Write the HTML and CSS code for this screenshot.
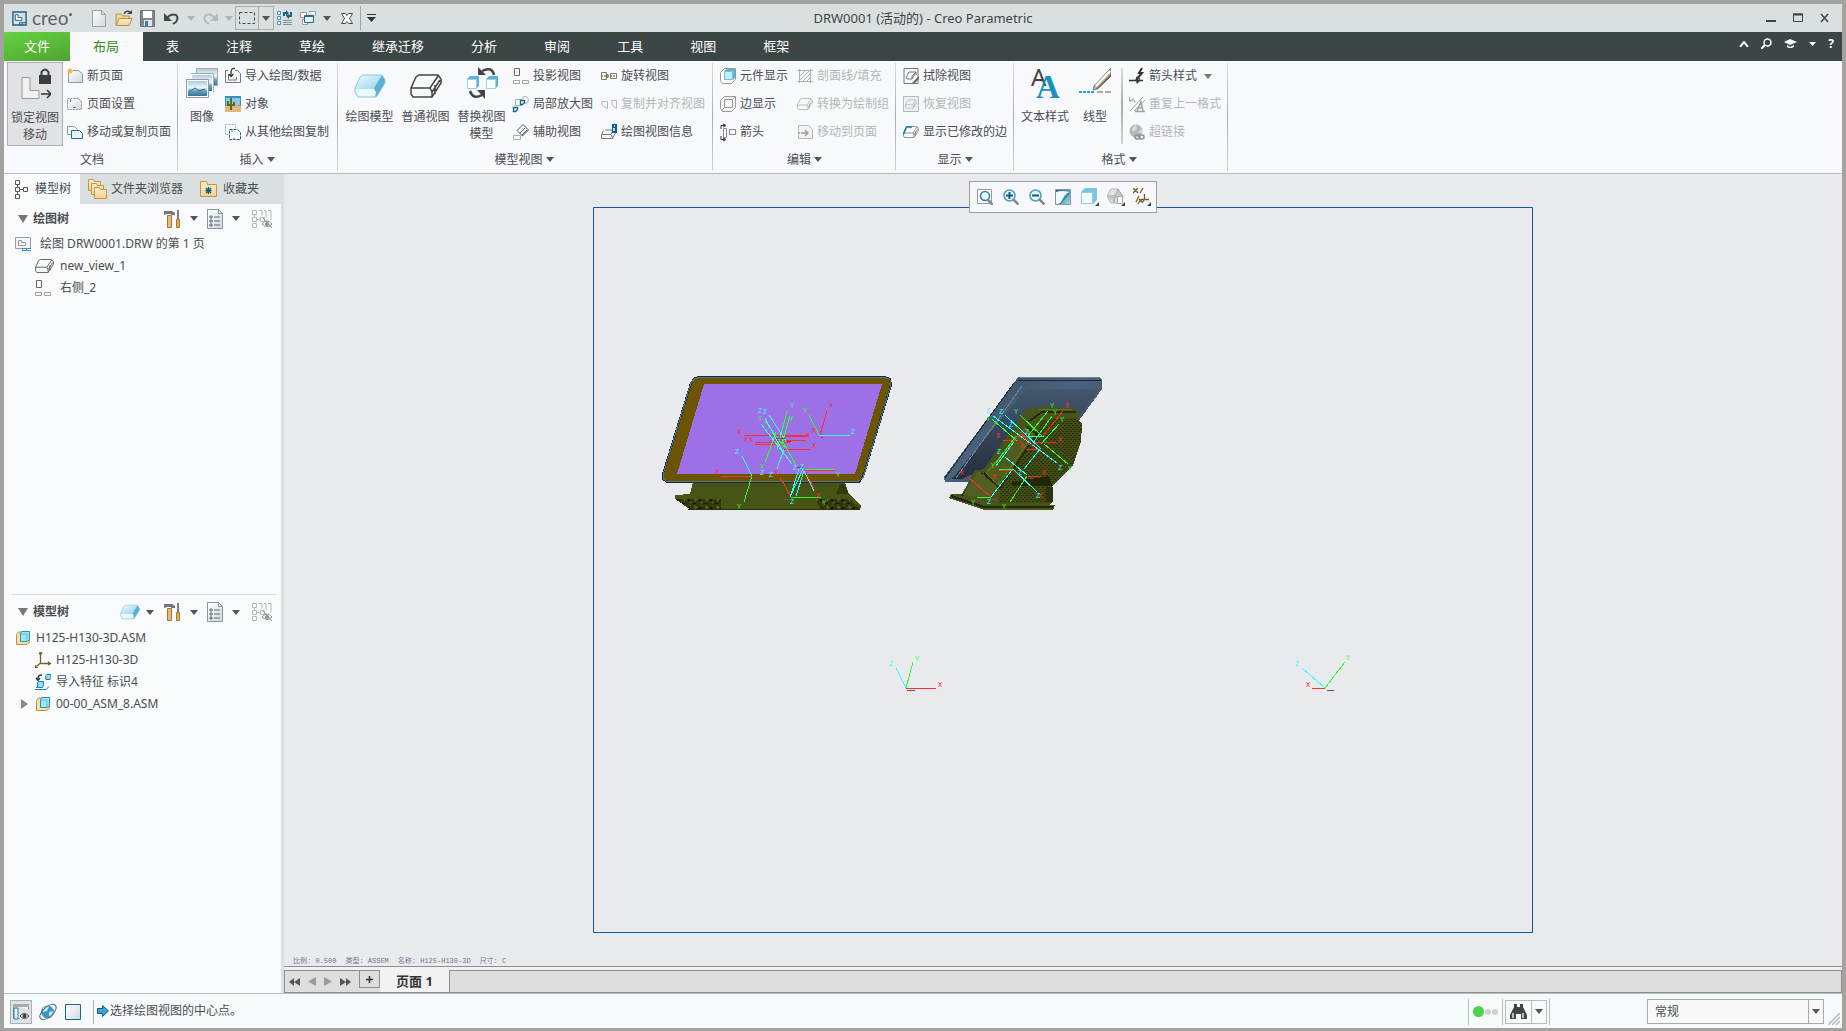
FILE: index.html
```html
<!DOCTYPE html>
<html lang="zh-CN">
<head>
<meta charset="utf-8">
<title>DRW0001 (活动的) - Creo Parametric</title>
<link rel="stylesheet" href="styles.css">
</head>
<body>
<svg class="defs" aria-hidden="true">
  <defs>
    <linearGradient id="gBlue" x1="0" y1="0" x2="1" y2="1"><stop offset="0" stop-color="#f0fcff"/><stop offset="1" stop-color="#8fd2ec"/></linearGradient>
    <linearGradient id="gPage" x1="0" y1="0" x2="1" y2="1"><stop offset="0" stop-color="#fff"/><stop offset="1" stop-color="#cfd8dd"/></linearGradient>
    <linearGradient id="gFolder" x1="0" y1="0" x2="0" y2="1"><stop offset="0" stop-color="#fff0cd"/><stop offset="1" stop-color="#f3cf90"/></linearGradient>
    <linearGradient id="gTeal" x1="0" y1="0" x2="1" y2="1"><stop offset="0" stop-color="#0d5f86"/><stop offset="1" stop-color="#a6dcf0"/></linearGradient>
    <linearGradient id="gSky" x1="0" y1="0" x2="0" y2="1"><stop offset="0" stop-color="#a9cbe2"/><stop offset=".45" stop-color="#eef6fa"/><stop offset=".65" stop-color="#6aa6c2"/><stop offset="1" stop-color="#2f7598"/></linearGradient>
  </defs>
  <symbol id="caret" viewBox="0 0 8 5"><path d="M0 0h8L4 5z" fill="currentColor"/></symbol>
  <symbol id="solid" viewBox="0 0 32 24"><path d="m1 14 5-11 3-2h19l-8 13-1 1H1z" fill="url(#gBlue)"/><path d="m20 14 8-13 3 5v3l-8 13-2 1z" fill="#5cb0d3"/><path d="M1 15h19l2 3-1 5H4l-3-5z" fill="#e6fafe"/><path d="M6 3 1 14v4l3 5h17l2-1 8-13V6l-3-5H9z" fill="none" stroke="#86c6de"/></symbol>
  <symbol id="wire" viewBox="0 0 32 24"><path d="M1 14v6l2 3h19l9-14V5l-3-4H9L6 3zM1 14h19l2 4v5M20 14l8-12M22 18 30 6M25 20V11" fill="none" stroke="currentColor" stroke-width="1.500"/></symbol>
  <symbol id="proj" viewBox="0 0 16 16"><path d="M1.500.5h5v7h-5z" fill="none" stroke="#66696b"/><path d="M.5 12.500h6v3h-6zM9.500 12.500h6v3h-6z" fill="none" stroke="#a0a4a6"/></symbol>
  <symbol id="hammer" viewBox="0 0 18 20"><path d="M1 2h8l3 2v2H8V5H4L1 6z" fill="#6f767d"/><path d="M4.500 6.500h4v12h-4z" fill="#e6bd7c" stroke="#a9772f"/><path d="M15 1v9" stroke="#777d83" stroke-width="2"/><path d="M13.500 10.500h3v8h-3z" fill="#e2b15f" stroke="#a9772f"/></symbol>
  <symbol id="list" viewBox="0 0 16 20"><path d="M.5.5h11l4 4v15H.5z" fill="url(#gPage)" stroke="#8b959b"/><path d="M11.500.5v4h4" fill="none" stroke="#8b959b"/><path d="M3 7h2v2H3zM3 11h2v2H3zM3 15h2v2H3zM7 8h6M7 12h6M7 16h6" fill="none" stroke="#5a6c77"/></symbol>
  <symbol id="filter" viewBox="0 0 20 20"><g fill="none" stroke="#b5babd"><path d="M.5 1.500h4v4h-4zM.5 8.500h4v4h-4zM.5 14.500h4v4h-4zM8.500 8.500h4v4h-4zM2.500 6v2M5 10.500h3M7 1.500h3v5M12 1.500h2v7M16 1.500h3v9"/></g><path d="M10 15q5-6 10 0-5 5-10 0z" fill="none" stroke="#8d9295"/><circle cx="15" cy="15" r="2" fill="#8d9295"/><path d="M11 9l9 10" stroke="#8d9295"/></symbol>
  <symbol id="asm" viewBox="0 0 16 16"><path d="M1.500 4.500 3.500 2h11v10l-2.500 2.500H1.500z" fill="#fbdfa4" stroke="#b98f4a"/><path d="M5.500 3.500 7 1.500h7.500v8l-2 2h-7z" fill="#9be6fb" stroke="#2f8fb5"/><path d="M6 4h6v7" fill="none" stroke="#5dbbdc"/></symbol>
</svg>
<div class="app">
  <header class="titlebar">
    <div class="quick">
      <svg class="app-icon" viewBox="0 0 16 16"><path d="M1 1h14v14H1z" fill="none" stroke="#1c6287" stroke-width="1.500"/><path d="M3.500 4v6h7V7h-4V4z" fill="#fff" stroke="#1c6287"/><path d="M8 15v-2.500h7M11 12v3" stroke="#1c6287" fill="none"/></svg>
      <span class="brand">creo<i></i></span>
      <button class="ib q-new" aria-label="新建"><svg width="14" height="17"><path d="M.5.5h9l4 4v12H.5z" fill="url(#gPage)" stroke="#9aa0a3"/><path d="M9.500.5v4h4" fill="none" stroke="#9aa0a3"/></svg></button>
      <button class="ib" aria-label="打开"><svg width="18" height="17"><path d="M1 15V4h5l2 2h6v3" fill="#f3d49b" stroke="#b98d4a"/><path d="M1 15.500 4 8.500h13l-3 7z" fill="url(#gFolder)" stroke="#b98d4a"/><path d="M9 4q2-4 6-2" fill="none" stroke="#3c4646" stroke-width="1.500"/><path d="M12 4h5V0z" fill="#3c4646"/></svg></button>
      <button class="ib" aria-label="保存"><svg width="15" height="17"><path d="M.5.500h14v16H.5z" fill="#86898c" stroke="#6d7174"/><path d="M3 1h9v7H3z" fill="#fff"/><path d="M4 10h8v6H4z" fill="#dbe6ee"/><path d="M5 11h3v5H5z" fill="#467b9c"/></svg></button>
      <button class="ib q-undo" aria-label="撤消"><svg width="16" height="13"><path d="M3 6q4-5 9-3 3 3 0 7l-3 2" fill="none" stroke="#42494b" stroke-width="2"/><path d="M0 1v8h8z" fill="#42494b"/></svg></button>
      <button class="ib dim" aria-label="撤消列表"><svg width="8" height="5"><use href="#caret"/></svg></button>
      <button class="ib" aria-label="重做"><svg width="16" height="13"><path d="M13 6Q9 1 4 3 1 6 4 10l3 2" fill="none" stroke="#b4b9ba" stroke-width="2"/><path d="M16 1v8H8z" fill="#b4b9ba"/></svg></button>
      <button class="ib dim" aria-label="重做列表"><svg width="8" height="5"><use href="#caret"/></svg></button>
      <div class="split"><button aria-label="框选"><svg width="16" height="12"><path d="M.5.5h15v11H.5z" fill="none" stroke="#444" stroke-dasharray="3 2"/></svg></button><button aria-label="选择列表"><svg width="8" height="5"><use href="#caret"/></svg></button></div>
      <button class="ib" aria-label="重新生成"><svg width="16" height="16"><path d="M.5 1.500h3v3h-3zM.5 6.500h3v3h-3zM.5 11.500h3v3h-3z" fill="#fff" stroke="#3a93b8"/><path d="M6 10.500h9M6 12.500h9M6 14.500h9" stroke="#8b9194"/><path d="M7 6V3h3M14 2v4h-4" fill="none" stroke="#19637f" stroke-width="2"/><path d="M9 0v6l3-3zM12 4v5L9 6z" fill="#19637f"/></svg></button>
      <button class="ib" aria-label="窗口"><svg width="16" height="16"><path d="M.5 2.500h6v5h-6zM2.500 9.500h5v5h-5zM9 1.500h6.500v4" fill="#fff" stroke="#999"/><path d="M4.500 5.500h9v7h-9z" fill="#e6f2f8" stroke="#256d90"/><path d="M5 6.500h8" stroke="#256d90"/></svg></button>
      <button class="ib" aria-label="窗口列表"><svg width="8" height="5"><use href="#caret"/></svg></button>
      <button class="ib q-close" aria-label="关闭窗口"><svg width="12" height="11"><path d="M.5.5h4L6 2.500 7.500.5h4L8.500 5.500l3 5h-4L6 8.500l-1.500 2h-4l3-5z" fill="#fff" stroke="#444"/></svg></button>
      <button class="ib q-more" aria-label="自定义快速访问工具栏"><svg width="9" height="8"><path d="M0 .5h9" stroke="#333"/><path d="M0 3h9L4.500 8z" fill="#333"/></svg></button>
    </div>
    <h1 class="title">DRW0001 (活动的) - Creo Parametric</h1>
    <div class="winctl">
      <button aria-label="最小化"><svg width="10" height="10"><path d="M0 8h10" stroke="#444" stroke-width="2"/></svg></button>
      <button aria-label="最大化"><svg width="10" height="10"><path d="M.5 1h9v7.500h-9z" fill="none" stroke="#444"/><path d="M0 1.500h10" stroke="#444" stroke-width="2"/></svg></button>
      <button aria-label="关闭"><svg width="9" height="10"><path d="m1 1 7 8M8 1 1 9" stroke="#444" stroke-width="1.500"/></svg></button>
    </div>
  </header>

  <nav class="tabs">
    <button class="tab file">文件</button><button class="tab active">布局</button><button class="tab">表</button><button class="tab">注释</button><button class="tab">草绘</button><button class="tab">继承迁移</button><button class="tab">分析</button><button class="tab">审阅</button><button class="tab">工具</button><button class="tab">视图</button><button class="tab">框架</button>
    <div class="tabtools">
      <button aria-label="折叠功能区"><svg width="10" height="6"><path d="M1 6 5 1l4 5" fill="none" stroke="#fff" stroke-width="2"/></svg></button>
      <button aria-label="搜索"><svg width="11" height="11"><circle cx="6.500" cy="4.500" r="3.500" fill="none" stroke="#fff" stroke-width="1.500"/><path d="M4 7 0 11" stroke="#fff" stroke-width="2"/></svg></button>
      <button aria-label="学习"><svg width="13" height="10"><path d="M0 3 6 0l7 3-7 3z" fill="#fff"/><path d="M3 6v2q3 2 7 0V6L6 8z" fill="#fff"/></svg></button>
      <button aria-label="学习列表"><svg width="7" height="4"><path d="M0 0h7L3.500 4z" fill="#fff"/></svg></button>
      <button aria-label="帮助" class="help">?</button>
    </div>
  </nav>

  <section class="ribbon">
    <div class="group"><div class="gbody">
      <button class="big pressed"><svg width="32" height="34"><path d="M3 9.500h8v13h9v8H3z" fill="#f2f2f3" stroke="#999"/><path d="M20 7h12v9H20z" fill="#3b3d3e"/><path d="M22.500 7V4q3.500-5 7 0v3" fill="none" stroke="#3b3d3e" stroke-width="2"/><path d="M22 26h9M28 22l4 4-4 4" fill="none" stroke="#333" stroke-width="1.500"/></svg><span>锁定视图<br>移动</span></button>
      <div class="col">
        <button class="sm"><svg viewBox="0 0 16 16"><path d="M1.500 5V14.500h14V6L11.500 2.500H6" fill="url(#gPage)" stroke="#93999c"/><path d="M3 0v6M0 3h6M1 1l4 4M5 1 1 5" stroke="#f5a623"/></svg>新页面</button>
        <button class="sm"><svg viewBox="0 0 16 16"><path d="M.5 2.500h11l3 3v8H.5z" fill="url(#gPage)" stroke="#8a9194" stroke-dasharray="2 1"/><path d="M3.500 3v3M6 11.500h3" stroke="#777"/></svg>页面设置</button>
        <button class="sm"><svg viewBox="0 0 16 16"><path d="M.5 10.500v-8h7l3 3v5z" fill="#f5f6f7" stroke="#999"/><path d="M4.500 6.500h8l3 3v5h-11z" fill="#e5f2f9" stroke="#226c90"/></svg>移动或复制页面</button>
      </div>
    </div><div class="glabel">文档</div></div>

    <div class="group g-insert"><div class="gbody">
      <button class="big"><svg width="32" height="34"><path d="M10.500 1.500h21v17h-21z" fill="url(#gSky)" stroke="#aaa"/><path d="M5.500 7.500h21v17h-21z" fill="url(#gSky)" stroke="#fff"/><path d="M4.500 6.500h23v19" fill="none" stroke="#aaa"/><path d="M.5 12.500h22v18H.5z" fill="#fff" stroke="#999"/><path d="M2 14h19v15H2z" fill="url(#gSky)"/><path d="m3 25 6-4 4 3 6-2" stroke="#316c8a" fill="none"/></svg><span>图像</span></button>
      <div class="col">
        <button class="sm"><svg viewBox="0 0 16 16"><path d="M3 2.500H.5v12h15v-9l-3-3H10M3.500 7v5h8V9" fill="#f4f5f5" stroke="#777"/><path d="M10 .5Q6 0 6 4v4M3.500 6 6 8.500 8.500 6" fill="none" stroke="#333" stroke-width="1.300"/></svg>导入绘图/数据</button>
        <button class="sm"><svg viewBox="0 0 16 16"><path d="M0 0h16v16H0z" fill="#3d90b8"/><path d="M1 2h14v7H1z" fill="#8ac9e7"/><path d="M0 10 8 8l8 2v6H0z" fill="#dfb777"/><path d="M6 14V2M3 5v4h6V6" fill="none" stroke="#5b6b20" stroke-width="2"/></svg>对象</button>
        <button class="sm"><svg viewBox="0 0 16 16"><path d="M.5.5h10v10H.5z" fill="none" stroke="#8fb0c0" stroke-dasharray="2 1"/><path d="M4.500 5.500h8l3 3v7h-11z" fill="#fff" stroke="#155f83" stroke-dasharray="3 1"/><path d="M7 6v2M9 13.500v2" stroke="#888"/></svg>从其他绘图复制</button>
      </div>
    </div><button class="glabel">插入<svg width="8" height="5"><use href="#caret"/></svg></button></div>

    <div class="group g-views"><div class="gbody">
      <button class="big"><svg width="32" height="34"><use href="#solid" y="7" width="32" height="24"/></svg><span>绘图模型</span></button>
      <button class="big"><svg width="32" height="34"><use href="#wire" y="7" width="32" height="24"/></svg><span>普通视图</span></button>
      <button class="big"><svg width="32" height="34"><path d="m1 12 3-3h9v10l-3 3V12zM20 12l3-3h9v10l-3 3V12z" fill="#5bb2d6"/><path d="M1.500 12.500h9v9h-9zM20.500 12.500h9v9h-9z" fill="#fff" stroke="#9fcfe2"/><path d="M28 8Q26-1 16 4M4 24q3 9 12 4" fill="none" stroke="#444" stroke-width="2.500"/><path d="M12 0v8h8zM19 32v-9h-8z" fill="#444"/></svg><span>替换视图<br>模型</span></button>
      <div class="col">
        <button class="sm"><svg viewBox="0 0 16 16"><use href="#proj"/></svg>投影视图</button>
        <button class="sm"><svg viewBox="0 0 16 16"><path d="M2.500 3.500h6v6h-6z" fill="none" stroke="#aaa"/><circle cx="12" cy="4" r="3.500" fill="none" stroke="#aaa"/><path d="M7.500 4.500h4v2l-2 2h-2zM.5 11.500h4v2l-2 2h-2z" fill="#fff" stroke="#15658b" stroke-width="1.400"/></svg>局部放大图</button>
        <button class="sm"><svg viewBox="0 0 16 16"><path d="m10 .5 5.500 5.500-6 6L4 6.500zM7 9l5-5M9 11l5-5" fill="none" stroke="#555"/><path d="M.5 11.500h7v4h-7z" fill="#fff" stroke="#aaa"/></svg>辅助视图</button>
      </div>
      <div class="col c2">
        <button class="sm"><svg viewBox="0 0 16 16"><path d="M.5 4.500h5v7h-5zM9.500 5.500h6v5h-6zM5 6.500h2v3H5" fill="none" stroke="#777"/><path d="M0 8h16" stroke="#a0782b" stroke-width="1.500" stroke-dasharray="2 1"/></svg>旋转视图</button>
        <button class="sm" disabled><svg viewBox="0 0 16 16"><path d="M.5 5.500h6v7l-4-2q-2-2-2-5zM15.500 4.500h-5l1 5 4 3z" fill="none" stroke="#b5b9bb"/></svg>复制并对齐视图</button>
        <button class="sm"><svg viewBox="0 0 16 16"><path d="m2.500 6.500-2 4v4h11l3-6M1 10.500h9l2 4M10 10.500 12 6H4" fill="#f7f7f7" stroke="#777"/><path d="M11 0h5v9h-5z" fill="#0c5f88"/><path d="M13 2h1M13 4v3" stroke="#fff" stroke-width="1.500"/></svg>绘图视图信息</button>
      </div>
    </div><button class="glabel">模型视图<svg width="8" height="5"><use href="#caret"/></svg></button></div>

    <div class="group g-edit"><div class="gbody">
      <div class="col">
        <button class="sm"><svg viewBox="0 0 16 16"><path d="M.5 4.500v8l2 3h9l4-4V.5h-11z" fill="#fff" stroke="#999"/><path d="m4 3 3-2h8l-2 2zM13 3l2-2v9l-2 2z" fill="#5cb4d7"/><path d="M4.500 3.500h8v8h-8z" fill="#c6ecf9" stroke="#6cc0de"/></svg>元件显示</button>
        <button class="sm"><svg viewBox="0 0 16 16"><path d="M.5 4.500v8l2 3h9l4-4V.5h-11zM4.500 3.500h8v8h-8zM4.500 11.500l-3 3M12.500 3.500l3-3" fill="none" stroke="#999"/></svg>边显示</button>
        <button class="sm"><svg viewBox="0 0 16 16"><path d="M3.500 4.500h3v9h-3zM9.500 5.500h6v5h-6z" fill="none" stroke="#888"/><path d="M5 1.500H1V5M5 15.500H1V12M3 0l3 1.500L3 3M3 14l3 1.500L3 17" fill="none" stroke="#333"/></svg>箭头</button>
      </div>
      <div class="col">
        <button class="sm" disabled><svg viewBox="0 0 16 16"><path d="M0 2.500h16M0 13.500h16M2.500 1v14M13.500 1v14M3 8l5-5M3 12l9-9M6 13l7-7M10 13l3-3" stroke="#adb1b3"/></svg>剖面线/填充</button>
        <button class="sm mute" disabled><svg viewBox="0 0 16 16"><use href="#wire" y="2" width="16" height="12"/></svg>转换为绘制组</button>
        <button class="sm" disabled><svg viewBox="0 0 16 16"><path d="M1.500 1.500h10l4 4v9h-14z" fill="#f2f3f3" stroke="#b5b9bb"/><path d="M1 9h2M4 9h2M6 9h5M8 6l3 3-3 3" fill="none" stroke="#969a9c" stroke-width="1.500"/></svg>移动到页面</button>
      </div>
    </div><button class="glabel">编辑<svg width="8" height="5"><use href="#caret"/></svg></button></div>

    <div class="group"><div class="gbody">
      <div class="col">
        <button class="sm"><svg viewBox="0 0 16 16"><path d="M1 .5h14v15H1z" fill="#f7f8f8" stroke="#777"/><path d="m3 10 3-6h7l-4 7H4zM9 11V8l4-4v3" fill="none" stroke="#777"/><path d="m9 15 7-7v3l-4 4z" fill="#666"/></svg>拭除视图</button>
        <button class="sm mute" disabled><svg viewBox="0 0 16 16"><path d="M.5.5h15v15H.5z" fill="#eef0f0" stroke="#b5b9bb"/><use href="#wire" x="2" y="3" width="12" height="10"/></svg>恢复视图</button>
        <button class="sm"><svg viewBox="0 0 16 16"><use href="#wire" y="2" width="16" height="12"/><path d="m.5 10 3-7H9" fill="none" stroke="#1677a4" stroke-width="1.500"/></svg>显示已修改的边</button>
      </div>
    </div><button class="glabel">显示<svg width="8" height="5"><use href="#caret"/></svg></button></div>

    <div class="group g-format"><div class="gbody">
      <button class="big"><svg class="letters" width="32" height="34"><text x="2" y="19" class="aa1">A</text><text x="7" y="31" class="aa2">A</text></svg><span>文本样式</span></button>
      <button class="big"><svg width="32" height="34"><path d="M32 1v8L18 22l-4 1 1-4z" fill="#b9b5b1" stroke="#777"/><path d="M31 4 17 19" stroke="#fff" stroke-width="2"/><path d="M32 8 18 22" stroke="#77563b" stroke-width="1.500"/><path d="M0 25h16" stroke="#26a2d6" stroke-width="2" stroke-dasharray="3 1"/><path d="M18 25h14" stroke="#aaa" stroke-width="2" stroke-dasharray="6 2"/></svg><span>线型</span></button>
      <div class="vsep"></div>
      <div class="col">
        <button class="sm"><svg viewBox="0 0 16 16"><path d="m13 0-3 5h3l-6 7" fill="none" stroke="#333" stroke-width="2"/><path d="M0 12.500h14M8 8.500v7M8 9q5 2 0 6" fill="none" stroke="#333" stroke-width="1.300"/></svg>箭头样式<svg class="c" viewBox="0 0 8 5"><use href="#caret"/></svg></button>
        <button class="sm" disabled><svg viewBox="0 0 16 16"><path d="M.5 1v4h4M1 5Q5 0 6 7M1 15 14 1M5 15 16 4" fill="none" stroke="#9da2a4"/><path d="m8 15 4-9 2 9M9 12h5M6 15.500h10" fill="none" stroke="#9da2a4" stroke-width="1.500"/></svg>重复上一格式</button>
        <button class="sm" disabled><svg viewBox="0 0 16 16"><circle cx="7" cy="7" r="6.500" fill="#b5b8b9"/><path d="m3 4 4-3 1 4-4 3zM9 8l4-3v4z" fill="#d9dbdc"/><rect x="6" y="11" width="5" height="4" rx="2" fill="none" stroke="#8f9395" stroke-width="1.500"/><rect x="10" y="11" width="5" height="4" rx="2" fill="none" stroke="#8f9395" stroke-width="1.500"/></svg>超链接</button>
      </div>
    </div><button class="glabel">格式<svg width="8" height="5"><use href="#caret"/></svg></button></div>
  </section>

  <main class="work">
    <aside class="panel">
      <div class="ptabs">
        <button class="ptab on"><svg width="15" height="20"><path d="M1.500 1.500h4v4h-4zM1.500 8.500h4v4h-4zM1.500 15.500h4v4h-4zM9.500 8.500h4v4h-4zM3.500 6v2M3.500 13v2M6 10.500h3" fill="#fff" stroke="#555"/></svg>模型树</button>
        <button class="ptab"><svg width="19" height="20"><g fill="url(#gFolder)" stroke="#c49348"><path d="M.5 3.500v-3h5l1 2h6v9H.5z"/><path d="M3.500 7.500v-3h5l1 2h6v9h-12z"/><path d="M6.500 11.500v-3h5l1 2h6v9h-12z"/></g></svg>文件夹浏览器</button>
        <button class="ptab fav"><svg width="17" height="16"><path d="M.5 15.500V.5h6l1 3h9v12z" fill="url(#gFolder)" stroke="#c49348"/><path d="M8.500 6v7M5.500 9.500h6M6 7l5 5M11 7l-5 5" stroke="#0b6387" stroke-width="1.300"/></svg>收藏夹</button>
      </div>
      <div class="trees">
        <section class="tree t1">
          <header class="thead"><span class="tri"></span><h2>绘图树</h2>
            <button aria-label="设置"><svg width="18" height="20"><use href="#hammer"/></svg><svg width="8" height="5"><use href="#caret"/></svg></button>
            <button aria-label="显示"><svg width="16" height="20"><use href="#list"/></svg><svg width="8" height="5"><use href="#caret"/></svg></button>
            <button class="flt" aria-label="过滤"><svg width="20" height="20"><use href="#filter"/></svg></button>
          </header>
          <ul>
            <li class="root page"><svg width="16" height="15"><path d="M.5.5h15v11h-15z" fill="#f5f7f8" stroke="#99a"/><path d="M3.500 3.500v5h7v-3h-4v-2z" fill="none" stroke="#999"/><path d="M7 13.500h9M7 11.500h9M7.500 11v3M11.500 11v3" stroke="#3892bd"/></svg>绘图 DRW0001.DRW 的第 1 页</li>
            <li class="kid wide"><svg width="19" height="16"><use href="#wire"/></svg>new_view_1</li>
            <li class="kid wide"><svg width="19" height="16"><use href="#proj" width="16" height="16"/></svg>右侧_2</li>
          </ul>
        </section>
        <section class="tree t2">
          <header class="thead"><span class="tri"></span><h2>模型树</h2>
            <button class="mdl" aria-label="模型"><svg width="20" height="16"><use href="#solid"/></svg><svg width="8" height="5"><use href="#caret"/></svg></button>
            <button aria-label="设置"><svg width="18" height="20"><use href="#hammer"/></svg><svg width="8" height="5"><use href="#caret"/></svg></button>
            <button aria-label="显示"><svg width="16" height="20"><use href="#list"/></svg><svg width="8" height="5"><use href="#caret"/></svg></button>
            <button class="flt" aria-label="过滤"><svg width="20" height="20"><use href="#filter"/></svg></button>
          </header>
          <ul>
            <li class="root"><svg width="16" height="16"><use href="#asm"/></svg>H125-H130-3D.ASM</li>
            <li class="kid"><svg width="16" height="16"><path d="M5.500 0v11M5 11.500h10M5.500 11 0 15.500M4 2l1.500-2L7 2M13 10l2.500 1.500L13 13M0 13v3h3" fill="none" stroke="#7b5d22" stroke-width="1.300"/></svg>H125-H130-3D</li>
            <li class="kid"><svg width="16" height="16"><path d="M10.500 2.500 12 .5h4v4l-1 1h-4zM2.500 8.500l1-1h5v4l-1 2h-5z" fill="#8fdcf5" stroke="#1c7ea8"/><path d="M0 15.500h11l3-3M1 14l2-2" fill="none" stroke="#1c7ea8"/><path d="M7 1Q2 1 3 6M1 4l2 2.500L5 4" fill="none" stroke="#333" stroke-width="1.300"/></svg>导入特征 标识4</li>
            <li class="kid exp"><svg width="16" height="16"><use href="#asm"/></svg>00-00_ASM_8.ASM</li>
          </ul>
        </section>
      </div>
    </aside>

    <div class="stage">
      <div class="canvas">
        <svg class="drawing" viewBox="284 174 1558 792" preserveAspectRatio="xMidYMid meet" role="img" aria-label="工程图">
          <defs>
            <pattern id="mesh" width="4" height="4" patternUnits="userSpaceOnUse"><path d="M0 0h4v4H0z" fill="#434d13"/><path d="M0 1h2v1H0zM2 3h2v1H2z" fill="#252c09"/></pattern>
            <pattern id="spots" width="11" height="8" patternUnits="userSpaceOnUse"><path d="M0 0h11v8H0z" fill="#2f370b"/><path d="m1 1 4 2-3 3zM7 5l3 1-2 2zM6 1h3v1z" fill="#59631f"/><path d="m5 4 3-2v4zM0 7h3v1H0z" fill="#121605"/></pattern>
            <linearGradient id="slate" x1="0" y1="0" x2="1" y2="1"><stop offset="0" stop-color="#31455a"/><stop offset=".45" stop-color="#4b647d"/><stop offset="1" stop-color="#2d3a49"/></linearGradient>
            <linearGradient id="back" x1="0" y1="0" x2="0" y2="1"><stop offset="0" stop-color="#43586e"/><stop offset="1" stop-color="#252f3c"/></linearGradient>
          </defs>
          <path d="M593.500 207.500h939v725h-939z" fill="none" stroke="#14579b"/>

          <!-- front view -->
          <g shape-rendering="crispEdges">
            <path d="M693 482h152l4 12 12 11v3l-3 2H691l-16-11v-4l15-1z" fill="#485416"/>
            <path d="M675 499h46v10h-31zM815 499h33l13 9-4 2h-35z" fill="url(#spots)"/>
            <path d="M840 484h4l5 10h-13z" fill="#303a0b"/><path d="M688 509.500h172" stroke="#293008"/>
            <path d="M700 377h185l5 2 1 6-28 92-4 5H667l-4-3v-5l28-91 4-5z" fill="#6b5402" stroke="#1c2832" stroke-width="2"/>
            <path d="M700 377.500h185l5 2 1 5-28 93-5 4H667l-4-3v-4l28-92 4-4z" fill="none" stroke="#58748d"/>
            <path d="M704 384h178l-27 90H677z" fill="#9e70e8"/>
            <path d="M694 396h2v2h-2zM684 429h2v1h-2zM678 446h2v1h-2z" fill="#a4300b"/>
          </g>
          <!-- side view -->
          <g shape-rendering="crispEdges">
            <path d="M1018 377h82l2 3v9l-38 52-81 41h-38l-1-5 72-97z" fill="url(#slate)"/>
            <path d="M1030 389h69l-30 42-90 40-17 8h-10l64-78q5-9 14-12z" fill="url(#back)"/>
            <path d="M1018 380.500h83M1014 383 945 478" fill="none" stroke="#1e2934"/><path d="M1020 377.500h80M1022 386 956 478" fill="none" stroke="#6b8298"/>
            <path d="m1036 407 38 1 4 4v7l4 5-1 18-8 24-21 20 1 15-3 4h5l-2 5H984l-35-12 2-4h11l13-24h8l43-60z" fill="#48541a"/>
            <path d="m1042 420 35-2 5 6-1 18-8 24-21 20v17h-54l5-23 27-33z" fill="url(#mesh)"/>
            <path d="m1028 422 14-10h34M1027 427l10 7-37 54-15-12M984 473l14 10M962 496l20-23" fill="none" stroke="#242b08" stroke-width="2"/>
            <path d="m1025 428 8 7-35 50-12-12zM1038 409h34" fill="#505c1c" stroke="#667423"/>
            <path d="m963 495 15-24 20 16-7 11z" fill="#535e24"/>
            <path d="M951 496 984 507h69" fill="none" stroke="#20280a" stroke-width="2"/>
            <path d="m1012 482 37-6 3 10h-40z" fill="#1f260a"/>
            <path d="M1046 487h7v15h-7z" fill="#2a330b"/>
          </g>
          <g class="axes" shape-rendering="crispEdges">
            <path class="r" d="M744 435.500h65M780 436.500h27M755 442.500h35M770 440.500h36M755 444.500h30M780 449.500h30M827 411l-7 24M721 476.500h31M780 477l11 20M805 470.500h30M806 472l9 19"/>
            <path class="g" d="m809 415 10 20M787 411l-10 39M790 416l-8 28M765 421l20 27M783 442l13 23M776 432l-11 31M752 476l-8 26M805 469.500h30M791 497.500h30"/>
            <path class="b" d="M819 435.500h31M765 418l18 34M769 415l17 26M761 424l31 40M784 449l-7 20M742 456l10 20M803 469l-13 28M804 471l10 20M799 469l-9 28M804 471l-8 25"/>
            <path class="r" d="m968 477 23 20M1003 440.500h15M1016 436.500h22M1033 442.500h23M1026 449.500h14M1063 411l-20 25M999 470.500h15M1028 476.500h13M1012 468l24 23M1018 431l23 21"/>
            <path class="g" d="m992 419 25 22M1020 415l23 22M1048 411l-21 26M1052 416l-19 27M1059 424l-18 20M1044 444l24 20M1016 436l-20 27M1027 476l-17 26M999 469.500h15M977 497.500h14"/>
            <path class="b" d="m993 416 64 47M1005 415l36 34M1014 442l-18 24M1040 449l-16 20M1005 457l22 18M1012 470l-21 27M1014 470l23 22M1028 436h16"/>
            <path class="r" d="M906 688.500h30M1312 688.500h13"/><path class="g" d="m906 688 7-26M1325 688l20-26"/><path class="b" d="m906 688-10-20M1325 688l-23-20"/>
            <path class="n" d="M907 690.500h8M1327 690.500h7M776 438.500h10M787 441.500h4M797 467.500h6M753 478.500h4M784 499.500h5M821 437.500h2M1016 442.500h7M1028 444.500h6M1005 467.500h6M1030 478.500h4M992 499.500h5"/>
          </g>
          <g class="lab r"><text x="737" y="434">X</text><text x="744" y="442">X</text><text x="749" y="442">X</text><text x="829" y="408">X</text><text x="806" y="438">X</text><text x="812" y="433">X</text><text x="812" y="448">X</text><text x="715" y="474">X</text><text x="774" y="475">X</text><text x="816" y="498">X</text><text x="960" y="475">X</text><text x="996" y="438">X</text><text x="1020" y="448">X</text><text x="1058" y="442">X</text><text x="1065" y="408">X</text><text x="1042" y="475">X</text><text x="1038" y="498">X</text><text x="992" y="479">X</text><text x="938" y="687">X</text><text x="1306" y="687">X</text></g>
          <g class="lab g"><text x="803" y="413">Y</text><text x="790" y="408">Y</text><text x="789" y="421">Y</text><text x="758" y="421">Y</text><text x="760" y="469">Y</text><text x="737" y="509">Y</text><text x="836" y="477">Y</text><text x="822" y="505">Y</text><text x="986" y="421">Y</text><text x="1014" y="414">Y</text><text x="1050" y="408">Y</text><text x="1053" y="415">Y</text><text x="1060" y="422">Y</text><text x="1068" y="471">Y</text><text x="991" y="468">Y</text><text x="971" y="505">Y</text><text x="1002" y="509">Y</text><text x="915" y="661">Y</text><text x="1346" y="660">Y</text></g>
          <g class="lab b"><text x="758" y="413">Z</text><text x="763" y="414">Z</text><text x="851" y="434">Z</text><text x="735" y="454">Z</text><text x="760" y="475">Z</text><text x="769" y="477">Z</text><text x="793" y="470">Z</text><text x="800" y="469">Z</text><text x="790" y="504">Z</text><text x="986" y="413">Z</text><text x="999" y="414">Z</text><text x="1009" y="427">Z</text><text x="1025" y="434">Z</text><text x="997" y="454">Z</text><text x="1058" y="470">Z</text><text x="1018" y="475">Z</text><text x="987" y="504">Z</text><text x="1036" y="498">Z</text><text x="889" y="666">Z</text><text x="1295" y="666">Z</text></g>
        </svg>
        <div class="viewbar" role="toolbar">
          <button aria-label="重新调整"><svg width="16" height="16"><path d="M.5.500h14v14H.5z" fill="#fff" stroke="#999"/><circle cx="8" cy="7" r="4.500" fill="#e9f6fb" stroke="#2d7ea3" stroke-width="1.500"/><path d="m11 11 5 5" stroke="#888" stroke-width="2.500"/></svg></button>
          <button aria-label="放大"><svg width="16" height="16"><circle cx="6.500" cy="6.500" r="5.500" fill="#e9f6fb" stroke="#4e9cbd" stroke-width="1.500"/><path d="M3 6.500h7M6.500 3v7" stroke="#12587c" stroke-width="2"/><path d="m10.500 10.500 5 5" stroke="#888" stroke-width="2.500"/></svg></button>
          <button aria-label="缩小"><svg width="16" height="16"><circle cx="6.500" cy="6.500" r="5.500" fill="#e9f6fb" stroke="#4e9cbd" stroke-width="1.500"/><path d="M3 6.500h7" stroke="#12587c" stroke-width="2"/><path d="m10.500 10.500 5 5" stroke="#888" stroke-width="2.500"/></svg></button>
          <button aria-label="重画"><svg width="16" height="16"><path d="M.5.500h15v15H.5z" fill="url(#gTeal)" stroke="#8a979d"/><path d="M1 3q6-2 13 0-6 3-8 11l-5 1z" fill="#eefaff"/><path d="M14 4 5 15" stroke="#14658a"/></svg></button>
          <button aria-label="显示样式"><svg width="18" height="18"><path d="m0 4 4-4h12v12l-4 4H0z" fill="#7cc6e2"/><path d="M.5 4.500h11v11H.5z" fill="#f3fcff" stroke="#8acce5"/><path d="M18 14v4h-4z" fill="#444"/></svg></button>
          <button aria-label="已保存方向"><svg width="18" height="18"><path d="m4 1-4 7 4 7h10l2-6-5-8z" fill="#e0e2e3" stroke="#b3b6b8"/><path d="M0 8h8l3-7 5 8H8l-1 6" fill="#c8cbcc" stroke="#a5a8aa"/><path d="M10.500 8.500h5v7h-5z" fill="#fff" stroke="#aaa"/><path d="M18 14v4h-4z" fill="#444"/></svg></button>
          <button aria-label="基准显示"><svg width="18" height="18"><path d="m0 0 5 5M5 0 0 5M10 0 7 5M6 8l-3 6M5 16l3-5M9 14l-3-3M11.500 6v6M8 11.500h8M11 12l-2 3" fill="none" stroke="#7c5c1e" stroke-width="1.300"/><path d="M18 14v4h-4z" fill="#444"/></svg></button>
        </div>
        <div class="note"><span>比例: 0.500</span><span>类型: ASSEM</span><span>名称: H125-H130-3D</span><span>尺寸: C</span></div>
      </div>
      <div class="sheets">
        <button aria-label="第一页"><svg width="11" height="8"><path d="M5 0v8L0 4zM11 0v8L5 4z" fill="#555"/></svg></button>
        <button aria-label="上一页"><svg width="8" height="9"><path d="M8 0v9L0 4.500z" fill="#999"/></svg></button>
        <button aria-label="下一页"><svg width="8" height="9"><path d="M0 0v9l8-4.500z" fill="#999"/></svg></button>
        <button aria-label="最后一页"><svg width="11" height="8"><path d="M0 0v8l6-4zM6 0v8l5-4z" fill="#555"/></svg></button>
        <button class="plus" aria-label="新页面"><svg width="7" height="7"><path d="M0 3.500h7M3.500 0v7" stroke="#333" stroke-width="1.500"/></svg></button>
        <button class="sheet">页面 1</button>
      </div>
    </div>
  </main>

  <footer class="status">
    <button class="st pressed" aria-label="导航器"><svg width="16" height="17"><path d="M.5 1.500h15v5M.5 1.500v14h6" fill="#fff" stroke="#888"/><path d="M0 1h16v3H0z" fill="#aaa"/><path d="M1 5h4v11H1z" fill="#e3f4fb" stroke="#2d7ea3"/><path d="M7 13q4-5 9 0-5 5-9 0z" fill="#fff" stroke="#444"/><circle cx="11.500" cy="13" r="2" fill="#333"/></svg></button>
    <button class="st" aria-label="浏览器"><svg width="18" height="18"><circle cx="8.500" cy="9" r="6.500" fill="#3797c7"/><path d="M4 5q4-3 6-1L8 8 4 9zM10 9l4-1-1 5-3 1z" fill="#c3e9f8"/><ellipse cx="9" cy="9" rx="10" ry="5" fill="none" stroke="#5b6468" transform="rotate(-42 9 9)"/></svg></button>
    <button class="st" aria-label="全屏"><svg width="16" height="16"><path d="M.5.500h15v15H.5z" fill="url(#gPage)" stroke="#1b6283"/></svg></button>
    <p class="msg"><svg width="12" height="12"><path d="M.5 3.500h5v-3L11.500 6l-6 5.500v-3h-5z" fill="#36a6d4" stroke="#12597a"/></svg>选择绘图视图的中心点。</p>
    <div class="light"><i class="on"></i><i></i><i></i></div>
    <div class="find"><button aria-label="查找"><svg width="17" height="16"><path d="M4 0h3v3h3V0h3v3l4 8v4h-6v-5H6v5H0v-4l4-8z" fill="#444"/><path d="M2 9h2v5H2zM12 9h2v5h-2z" fill="#bbb"/></svg></button><button aria-label="查找列表"><svg width="8" height="5"><use href="#caret"/></svg></button></div>
    <div class="combo"><select aria-label="选择过滤器"><option>常规</option></select><svg width="8" height="5"><use href="#caret"/></svg></div>
    <svg class="grip" width="12" height="12"><path d="M0 12 12 0M4 12l8-8M8 12l4-4" stroke="#b5b9ba" stroke-width="1.500"/></svg>
  </footer>
</div>
</body>
</html>
```
FILE: styles.css
```css
* { box-sizing: border-box; }
body { margin: 0; font: 12px/16px "Noto Sans", "Noto Sans CJK SC", sans-serif; color: #4b4d4f; }
button { font: inherit; color: inherit; border: 0; background: none; padding: 0; margin: 0; }
h1, h2, p, ul { margin: 0; padding: 0; font: inherit; }
svg { display: block; flex: none; color: #555; }
.defs { position: absolute; width: 0; height: 0; }

.app { min-height: 100vh; display: flex; flex-direction: column; border: 4px solid #a3a2a1; border-bottom-width: 3px; background: #f8f9fc; }

/* title bar */
.titlebar { height: 28px; display: grid; grid-template-columns: 1fr auto 1fr; align-items: center; background: #dae0df; }
.quick { display: flex; align-items: center; gap: 7px; height: 28px; padding-left: 8px; }
.app-icon { width: 15px; height: 15px; }
.brand { font: 19px/22px Lato, sans-serif; color: #5d6466; display: flex; margin-left: -2px; }
.brand i { width: 3px; height: 3px; border-radius: 50%; background: #5d6466; margin: 6px 0 0 1px; }
.q-new { margin: 0 2px 0 13px; }
.q-undo { margin-left: 2px; }
.dim svg { color: #adb3b3; }
.split { display: flex; align-items: stretch; height: 24px; border: 1px solid #a7acac; margin: 0 -4px 0 -5px; }
.split button { display: flex; align-items: center; padding: 0 3px; }
.split button + button { border-left: 1px solid #a7acac; }
.q-close { margin-left: 3px; }
.q-more { height: 24px; padding-left: 6px; border-left: 1px solid #9fa5a5; }
.title { font-size: 13px; color: #404446; }
.winctl { display: flex; gap: 17px; justify-content: flex-end; padding-right: 13px; }

/* tabs */
.tabs { height: 29px; display: flex; background: #3c4646; color: #fff; font-size: 13px; }
.tab { padding: 0 24px 1px 23px; }
.file { padding: 0 20px 1px; background: linear-gradient(165deg, #64d341, #4fa232); }
.active { background: #f8f9fc; color: #3e8a22; }
.tabtools { margin-left: auto; display: flex; align-items: center; gap: 12px; padding: 0 8px 6px 0; }
.help { font-weight: 700; font-size: 12px; }

/* ribbon */
.ribbon { display: flex; border-bottom: 1px solid #b6c0c0; }
.group { display: flex; flex-direction: column; position: relative; padding: 1px 7px 0 3px; }
.group + .group { padding-left: 7px; }
.group::after, .vsep { content: ""; width: 1px; background: linear-gradient(#d8dcdc, #a5adad, #d0d4d4); }
.group::after { position: absolute; right: 0; top: 2px; bottom: 2px; }
.gbody { display: flex; gap: 4px; height: 84px; }
.col { display: flex; flex-direction: column; }
.sm { display: flex; align-items: center; gap: 4px; height: 28px; white-space: nowrap; }
.sm svg { width: 16px; height: 16px; overflow: visible; color: #777; }
.sm svg.c { width: 8px; height: 5px; margin-left: 3px; }
.sm:disabled { color: #b3b6b8; }
.mute svg { color: #a5a9ab; }
.big { display: flex; flex-direction: column; align-items: center; gap: 7px; min-width: 56px; padding-top: 5px; line-height: 17px; }
.big svg { color: #444; }
.pressed { background: #e1e2e4; border: 1px solid #adb0b2; }
.glabel { height: 27px; display: flex; align-items: center; justify-content: center; gap: 3px; }
div.glabel { padding-left: 6px; }
.group.g-insert { padding-right: 9px; }
.g-insert .gbody { gap: 6px; }
.g-insert .big { min-width: 34px; }
.group.g-views { padding: 1px 8px 0 5px; }
.g-views .gbody { gap: 0; }
.g-views .big { margin-left: -3px; min-width: 59px; }
.g-views .col { margin-left: 2px; }
.g-views .c2 { margin-left: 8px; }
.g-edit .gbody { gap: 9px; }
.group.g-format { padding: 1px 7px 0 3px; }
.g-format .gbody { gap: 0; }
.g-format .big + .big { min-width: 44px; }
.vsep { width: 2px; margin: 6px 6px 2px 4px; }
.letters { overflow: visible; }
.aa1 { font: 24px "Noto Sans", sans-serif; fill: #444; }
.aa2 { font: bold 33px "Liberation Serif", serif; fill: #1d8fc1; }

/* navigator */
.work { flex: 1; display: flex; min-height: 400px; }
.panel { width: 280px; flex: none; display: flex; flex-direction: column; background: #f8fafc; border-right: 3px solid #dae0df; }
.ptabs { display: flex; height: 30px; background: #dae0df; }
.ptab { display: flex; align-items: center; gap: 6px; padding: 0 8px; }
.ptab:not(.on) { gap: 4px; }
.ptab.on { background: #f8fafc; padding: 0 9px 0 10px; }
.ptab.fav { gap: 6px; padding-left: 9px; }
.trees { flex: 1; display: flex; flex-direction: column; }
.t1 { flex: 1; }
.t2 { height: 399px; margin: 0 5px 0 8px; border-top: 1px solid #d3dada; }
.thead { height: 29px; display: flex; align-items: center; gap: 9px; padding: 0 9px 0 14px; }
.t2 .thead { height: 32px; padding: 2px 4px 0 6px; }
.thead h2 { font-weight: 700; margin: 0 auto 0 -4px; }
.thead button { display: flex; align-items: center; gap: 9px; }
.thead .mdl { gap: 6px; }
.thead .flt { margin-left: 3px; }
.tri { border: 5px solid transparent; border-top: 8px solid #777; border-bottom: 0; }
.tree ul { list-style: none; }
.tree li { height: 22px; display: flex; align-items: center; gap: 5px; padding-left: 31px; position: relative; }
.tree .root { padding-left: 11px; }
.tree .page { gap: 9px; }
.t2 li { margin-left: -8px; }
.tree .wide { gap: 6px; }
.exp::before { content: ""; position: absolute; left: 17px; border: 5px solid transparent; border-left: 7px solid #888; border-right: 0; }

/* drawing area */
.stage { flex: 1; min-width: 0; display: flex; flex-direction: column; background: #f2f2f2; }
.canvas { flex: 1; position: relative; background: #e8eaee; border-bottom: 1px solid #8b8e91; }
.drawing { position: absolute; width: 100%; height: 100%; }
.axes path { fill: none; stroke-width: 1; }
.axes .r { stroke: #ff2d2d; } .axes .g { stroke: #2dff2d; } .axes .b { stroke: #2dffff; } .axes .n { stroke: #7b4a4f; }
.lab { font: 7px "Liberation Mono", monospace; }
.lab.r { fill: #ff2d2d; } .lab.g { fill: #2dff2d; } .lab.b { fill: #2dffff; }
.viewbar { position: absolute; left: 50%; top: 7px; transform: translateX(-50%); width: 188px; height: 32px; display: flex; align-items: center; gap: 10px; padding-left: 7px; background: #f7f8fb; border: 1px solid #9b9fa3; }
.viewbar button { width: 16px; }
.note { position: absolute; left: 9px; bottom: 0; display: flex; gap: 9px; font: 7px/10px "Liberation Mono", "Noto Sans CJK SC", monospace; color: #737986; }
.sheets { height: 23px; margin-top: 3px; display: flex; align-items: stretch; background: #dedede; border: 1px solid #8b8e91; padding-left: 4px; gap: 8px; }
.sheets button { display: flex; align-items: center; }
.sheets .plus { width: 21px; height: 17px; justify-content: center; border: 1px solid #8b8e91; border-top: 0; }
.sheets .sheet { margin: -1px 0 0 -8px; padding: 0 16px; background: #f2f2f2; border-right: 1px solid #8b8e91; font-weight: 700; color: #333; font-size: 13px; }

/* status bar */
.status { height: 35px; flex: none; display: flex; align-items: center; border-top: 1px solid #b6c0c0; background: #f6fafb; padding: 1px 2px 0 6px; }
.st { width: 22px; height: 24px; display: grid; place-items: center; margin-right: 5px; }
.st + .st { margin-right: 3px; }
.msg { display: flex; align-items: center; gap: 1px; height: 24px; padding: 0 0 2px 3px; margin: 0 auto 0 6px; border-left: 1px solid #a8b0b0; }
.light { display: flex; align-items: center; gap: 1px; height: 26px; padding: 0 4px; border: solid #b6bcbc; border-width: 0 1px; margin-right: 2px; }
.light i { width: 6px; height: 6px; border-radius: 50%; background: #cfd1d1; }
.light .on { width: 11px; height: 11px; background: #49d549; }
.find { display: flex; height: 24px; border: 1px solid #b6bcbc; margin-right: 100px; position: relative; }
.find button { display: flex; align-items: center; padding: 0 4px; }
.find button + button { border-left: 1px solid #b6bcbc; padding: 0 3px; }
.find::after { content: ""; position: absolute; right: -4px; top: -2px; width: 1px; height: 26px; background: #b6bcbc; }
.combo { position: relative; }
.combo select { appearance: none; width: 177px; height: 25px; padding: 0 20px 0 7px; border: 1px solid #a6abad; border-radius: 0; background: linear-gradient(#a6abad, #a6abad) right 14px top / 1px 100% no-repeat #f8f8f8; font: inherit; color: inherit; }
.combo svg { position: absolute; right: 4px; top: 10px; pointer-events: none; }
.grip { align-self: flex-end; margin: 0 0 3px 4px; }
```
